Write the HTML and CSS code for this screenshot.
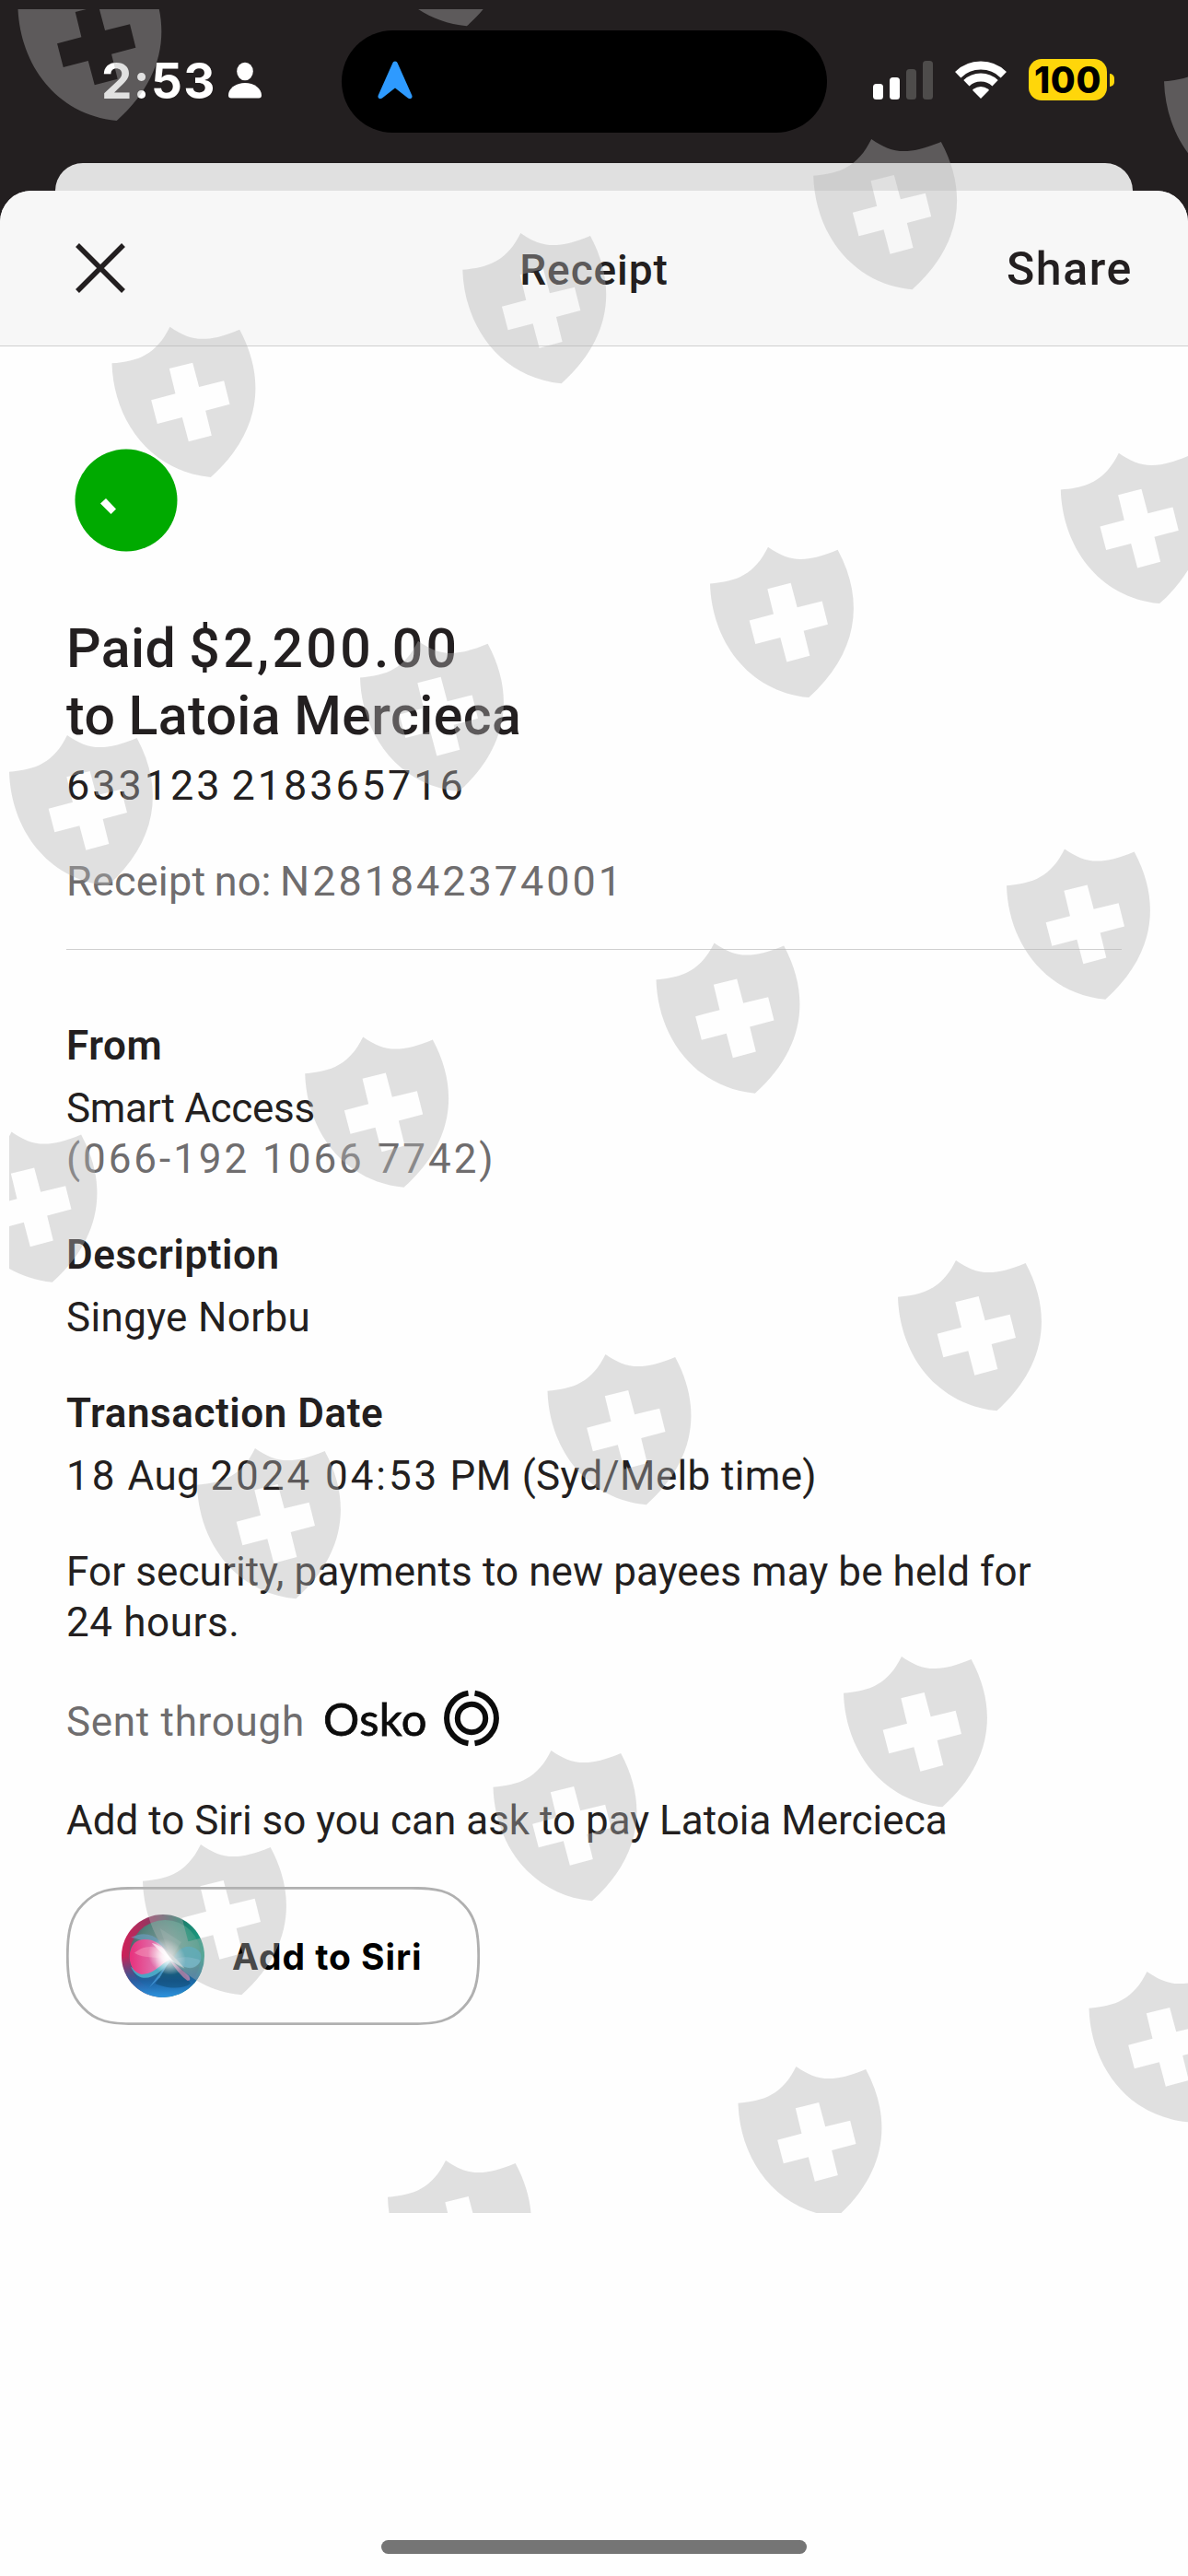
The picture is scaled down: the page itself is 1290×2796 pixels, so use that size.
FILE: index.html
```html
<!DOCTYPE html>
<html lang="en">
<head>
  <meta charset="UTF-8">
  <meta name="viewport" content="width=device-width, initial-scale=1.0">
  <title>Receipt</title>
  <link rel="stylesheet" href="styles.css">
</head>
<body>
  <div class="screen">
    <div class="status-bar">
      <div class="status-left">
        <span class="clock">2:53</span>
        <svg class="icon-person" viewBox="0 0 36 40" width="36" height="40">
          <ellipse cx="18" cy="10.5" rx="8.8" ry="9.8"/>
          <path d="M3 39.5C1 39.5 0 38.5 0 36.500C0 29 8 23 18 23C28 23 36 29 36 36.500C36 38.500 35 39.500 33 39.500Z"/>
        </svg>
      </div>
      <div class="island">
        <svg viewBox="0 0 38 42" width="38" height="42">
          <path d="M16.300 2.500C17 -.3 21 -.3 21.700 2.500L37.300 37.500C38.500 40.500 35.500 42.500 33 40.500L19 29.500L5 40.500C2.500 42.500 -.5 40.500 .7 37.500Z"/>
        </svg>
      </div>
      <div class="status-right">
        <svg class="icon-signal" viewBox="0 0 66 42" width="66" height="42">
          <rect x="0" y="25" width="11" height="17" rx="3.500"/>
          <rect x="18" y="18" width="11" height="24" rx="3.500"/>
          <rect class="dim" x="36" y="9" width="11" height="33" rx="3.500"/>
          <rect class="dim" x="54" y="0" width="11" height="42" rx="3.500"/>
        </svg>
        <svg class="icon-wifi" viewBox="0 0 58 42" width="58" height="42">
          <path class="wave" d="M4.200 16.200A35.500 35.500 0 0 1 53.800 16.200"/>
          <path class="wave" d="M13.400 25.200A22.500 22.500 0 0 1 44.600 25.200"/>
          <path d="M29 42L20.300 33.200Q20 32.300 20.800 31.800Q29 26 37.200 31.800Q38 32.300 37.700 33.200Z"/>
        </svg>
        <div class="battery">
          <span class="battery-level">100</span>
          <span class="battery-cap"></span>
        </div>
      </div>
    </div>

    <div class="sheet-behind"></div>

    <main class="sheet">
      <header class="sheet-header">
        <svg class="icon-close" viewBox="0 0 54 54" width="54" height="54">
          <path d="M2 2L52 52M52 2L2 52"/>
        </svg>
        <h2 class="sheet-title">Receipt</h2>
        <span class="share">Share</span>
      </header>

      <div class="receipt">
        <svg class="icon-paid" viewBox="0 0 112 112" width="112" height="112">
          <circle cx="56" cy="56" r="55.500"/>
          <path d="M34 54L45 65.500L39.500 71L28 59.500Z"/>
        </svg>

        <h1 class="amount">Paid <span class="num">$2,200.00</span><br>to Latoia Mercieca</h1>
        <p class="account num">633123 218365716</p>
        <p class="receipt-no">Receipt no: <span class="num">N281842374001</span></p>

        <dl class="details">
          <div>
            <dt>From</dt>
            <dd><span class="account-name">Smart Access</span><br><span class="muted num">(066-192 1066 7742)</span></dd>
          </div>
          <div>
            <dt>Description</dt>
            <dd>Singye Norbu</dd>
          </div>
          <div>
            <dt>Transaction Date</dt>
            <dd><span class="num">18</span> Aug <span class="num">2024 04:53</span> PM (Syd/Melb time)</dd>
          </div>
        </dl>

        <p class="notice">For security, payments to new payees may be held for<br><span class="hours">24 hours.</span></p>

        <div class="osko">
          <span class="muted">Sent through</span>
          <span class="osko-name">Osko</span>
          <svg class="osko-mark" viewBox="0 0 62 62" width="62" height="62">
            <circle cx="31" cy="31" r="15.200"/>
            <path d="M27.500 3.800A27.500 27.500 0 0 0 27.500 58.200M34.500 3.800A27.500 27.500 0 0 1 34.500 58.200"/>
          </svg>
        </div>

        <p class="siri-hint">Add to Siri so you can ask to pay Latoia Mercieca</p>

        <div class="siri-button">
          <svg class="siri-outline" viewBox="0 0 449 150" width="449" height="150">
            <path d="M75 1.300H374C402 1.300 417 4 431 19C444 32 447.700 48 447.700 75C447.700 102 444 118 431 131C417 146 402 148.700 374 148.700H75C47 148.700 32 146 18 131C5 118 1.300 102 1.300 75C1.300 48 5 32 18 19C32 4 47 1.300 75 1.300Z"/>
          </svg>
          <svg class="siri-orb" viewBox="0 0 270 270" width="90" height="90">
            <defs>
              <linearGradient id="rim" x1="0" y1=".4" x2="1" y2=".5">
                <stop offset="0" stop-color="#d02058"/>
                <stop offset=".35" stop-color="#8a3a62"/>
                <stop offset=".65" stop-color="#1c7868"/>
                <stop offset="1" stop-color="#18a084"/>
              </linearGradient>
              <linearGradient id="floor" x1="0" y1="0" x2="0" y2="1">
                <stop offset=".5" stop-color="#1a5f96" stop-opacity="0"/>
                <stop offset=".8" stop-color="#1c62a8" stop-opacity=".9"/>
                <stop offset="1" stop-color="#2c94e0"/>
              </linearGradient>
              <radialGradient id="teal" cx=".55" cy=".35" r=".65">
                <stop offset="0" stop-color="#94b4ac"/>
                <stop offset=".6" stop-color="#3a9c84"/>
                <stop offset="1" stop-color="#1c5d66"/>
              </radialGradient>
              <radialGradient id="glow">
                <stop offset="0" stop-color="#fff"/>
                <stop offset=".3" stop-color="#fff" stop-opacity=".8"/>
                <stop offset="1" stop-color="#fff" stop-opacity="0"/>
              </radialGradient>
              <linearGradient id="pink" x1="0" y1="0" x2="1" y2="0">
                <stop offset="0" stop-color="#e8307c"/>
                <stop offset=".6" stop-color="#e070ac"/>
                <stop offset="1" stop-color="#fff"/>
              </linearGradient>
            </defs>
            <circle cx="135" cy="135" r="135" fill="url(#rim)"/>
            <circle cx="142" cy="135" r="117" fill="url(#teal)" opacity=".75"/>
            <circle cx="135" cy="135" r="135" fill="url(#floor)"/>
            <path d="M155 155C185 145 205 190 225 225C190 250 130 235 110 225Z" fill="#0c4264" opacity=".45"/>
            <path d="M30 170C60 235 120 205 165 145C110 175 70 195 30 170Z" fill="#5cc8e0" opacity=".65"/>
            <path d="M30 75C85 45 135 75 165 145C110 105 70 80 30 75Z" fill="#6ea0c8" opacity=".6"/>
            <path d="M165 145C125 80 85 75 55 85C15 100 15 185 65 195C110 195 130 155 165 145Z" fill="url(#pink)"/>
            <path d="M165 150C120 90 75 100 42 125C70 145 125 135 165 150Z" fill="#f8a4c0" opacity=".45"/>
            <path d="M165 150C185 100 230 90 257 125C270 165 225 195 165 150Z" fill="#2ca8c0" opacity=".8"/>
            <path d="M165 150C190 135 225 135 257 150C240 185 210 180 165 150Z" fill="#60bcd8" opacity=".6"/>
            <path d="M155 145L220 200Q228 218 214 215Q185 195 155 145Z" fill="#e08cb4" opacity=".65"/>
            <path d="M160 145L90 238L125 205Z" fill="#58b4f0" opacity=".55"/>
            <path d="M160 145L125 45L195 90Z" fill="#fff" opacity=".12"/>
            <ellipse cx="148" cy="138" rx="66" ry="54" fill="url(#glow)" transform="rotate(38 148 138)"/>
            <path d="M98 92Q150 108 206 176Q150 150 98 92Z" fill="#fff" opacity=".6"/>
          </svg>
          <span class="siri-label">Add to Siri</span>
        </div>
      </div>
    </main>

    <div class="home-indicator"></div>

    <!-- Repeating shield watermark, clipped to its own canvas -->
    <svg class="watermark" viewBox="10 10 1280 2392" width="1280" height="2392">
      <defs>
        <path id="shield" transform="scale(.3333)" fill-rule="evenodd" d="M0 119C85 113 145 90 189 0C255 46 305 55 416 9C508 180 478 350 322 490C120 470 5 300 0 119ZM187 136L207 218L128 239L148 316L229 295L250 374L325 354L305 273L384 252L365 176L284 196L263 117Z"/>
      </defs>
      <use href="#shield" x="19.400" y="-32.300"/>
      <use href="#shield" x="399.500" y="-135"/>
      <use href="#shield" x="1264" y="48.500"/>
      <use href="#shield" x="883.200" y="151"/>
      <use href="#shield" x="502.300" y="253"/>
      <use href="#shield" x="121.500" y="354.700"/>
      <use href="#shield" x="1151.800" y="491.800"/>
      <use href="#shield" x="771" y="593.800"/>
      <use href="#shield" x="391" y="695.800"/>
      <use href="#shield" x="10" y="798"/>
      <use href="#shield" x="1093" y="921.500"/>
      <use href="#shield" x="712.500" y="1023.500"/>
      <use href="#shield" x="331.200" y="1125.500"/>
      <use href="#shield" x="-50.500" y="1228.500"/>
      <use href="#shield" x="975" y="1368"/>
      <use href="#shield" x="594.500" y="1470"/>
      <use href="#shield" x="214" y="1572"/>
      <use href="#shield" x="916" y="1798"/>
      <use href="#shield" x="535.500" y="1900"/>
      <use href="#shield" x="155" y="2002"/>
      <use href="#shield" x="1182.500" y="2140"/>
      <use href="#shield" x="801.500" y="2243"/>
      <use href="#shield" x="421" y="2345"/>
    </svg>
  </div>
</body>
</html>
```
FILE: styles.css
```css
:root {
  --ink: #231f20;
  --muted: #6f6d6e;
  --surface: #fefefe;
  --header: #f7f7f7;
  --line: #cfcfcf;
  --green: #00aa00;
  --battery: #ffd60a;
}

* {
  margin: 0;
  padding: 0;
  box-sizing: border-box;
}

body {
  background-color: var(--ink);
  color: var(--ink);
  font-family: Roboto, "Liberation Sans", sans-serif;
}

svg {
  display: block;
}

.screen {
  position: relative;
  width: 1290px;
  height: 2796px;
  overflow: hidden;
  display: flex;
  flex-direction: column;
}

/* Status bar */
.status-bar {
  height: 177px;
  flex-shrink: 0;
  display: grid;
  grid-template-columns: 371px 527px 1fr;
  align-items: start;
  padding-top: 33px;
}

.status-left {
  display: flex;
  align-items: center;
  gap: 14px;
  height: 111px;
  padding-left: 110px;
}

.clock {
  font-family: Inter, sans-serif;
  font-size: 53px;
  font-weight: 700;
  line-height: 64px;
  letter-spacing: 1.4px;
  color: #fff;
  width: 124px;
  margin-bottom: 2px;
}

.icon-person {
  fill: #fff;
  margin-bottom: 4px;
}

.island {
  height: 111px;
  border-radius: 56px;
  background-color: #000;
  padding: 33px 0 0 39px;
}

.island svg {
  fill: #2e9aff;
}

.status-right {
  display: flex;
  align-items: flex-start;
  padding: 31px 0 0 50px;
}

.icon-signal {
  fill: #fff;
  margin-top: 2px;
}

.icon-signal .dim {
  fill: #4e4c4b;
}

.icon-wifi {
  fill: #fff;
  margin: 1px 23px 0 22px;
}

.icon-wifi .wave {
  fill: none;
  stroke: #fff;
  stroke-width: 9;
}

.battery {
  display: flex;
  align-items: center;
  gap: 3px;
}

.battery-level {
  width: 85px;
  height: 45px;
  border-radius: 14px;
  background-color: var(--battery);
  color: #000;
  font-family: Inter, sans-serif;
  font-size: 39px;
  font-weight: 800;
  line-height: 45px;
  letter-spacing: 0.6px;
  text-align: center;
}

.battery-cap {
  width: 5px;
  height: 14px;
  border-radius: 0 5px 5px 0;
  background-color: var(--battery);
}

/* Sheets */
.sheet-behind {
  height: 30px;
  flex-shrink: 0;
  margin: 0 60px;
  border-radius: 30px 30px 0 0;
  background-color: #e0e0e0;
}

.sheet {
  flex: 1;
  border-radius: 34px 34px 0 0;
  background-color: var(--surface);
  overflow: hidden;
}

.sheet-header {
  height: 169px;
  display: grid;
  grid-template-columns: 1fr auto 1fr;
  align-items: center;
  padding: 0 60px 0 82px;
  background-color: var(--header);
  border-bottom: 1px solid var(--line);
}

.icon-close {
  stroke: var(--ink);
  stroke-width: 5.5;
}

.sheet-title {
  font-size: 46px;
  font-weight: 500;
  line-height: 56px;
  letter-spacing: 0.9px;
  margin-left: -22px;
  padding-top: 3px;
}

.share {
  justify-self: end;
  font-size: 50px;
  font-weight: 500;
  line-height: 56px;
  letter-spacing: 1.6px;
  padding-top: 1px;
}

/* Receipt */
.receipt {
  padding: 111px 72px 0;
  font-size: 44px;
  line-height: 55px;
  letter-spacing: 0.2px;
}

.icon-paid {
  fill: var(--green);
  margin-left: 8.5px;
}

.icon-paid path {
  fill: #fff;
}

.num {
  letter-spacing: 2.95px;
}

.muted {
  color: var(--muted);
}

.amount {
  margin-top: 68px;
  font-size: 59px;
  font-weight: 500;
  line-height: 73px;
  letter-spacing: 0.45px;
  word-spacing: -1px;
}

.amount .num {
  letter-spacing: 3.3px;
}

.account {
  margin-top: 12px;
  font-size: 45px;
  word-spacing: -4px;
}

.receipt-no {
  padding: 49px 0 46px;
  font-size: 45px;
  color: var(--muted);
  border-bottom: 1px solid var(--line);
  word-spacing: -2px;
}

.details {
  display: flex;
  flex-direction: column;
  gap: 49px;
  margin-top: 77px;
}

.details dt {
  font-weight: 600;
  letter-spacing: 0.55px;
  margin-bottom: 13px;
}

.details dd {
  letter-spacing: 0.35px;
}

.details .account-name {
  letter-spacing: -0.3px;
}

.details .num {
  letter-spacing: 2.95px;
}

.notice {
  margin-top: 49px;
  letter-spacing: 0.1px;
}

.hours {
  letter-spacing: 0.6px;
}

.osko {
  display: flex;
  align-items: center;
  height: 62px;
  margin-top: 45px;
}

.osko .muted {
  width: 279px;
  padding-top: 8px;
  letter-spacing: 0.7px;
}

.osko-name {
  width: 130px;
  font-family: Lato, sans-serif;
  font-size: 49px;
  font-weight: 400;
  letter-spacing: 0.4px;
  color: #0c0c0c;
  -webkit-text-stroke: 0.8px #0c0c0c;
}

.osko-mark {
  fill: none;
  stroke: #0c0c0c;
  stroke-width: 6;
}

.siri-hint {
  margin-top: 53px;
  letter-spacing: 0;
}

.siri-button {
  position: relative;
  display: flex;
  align-items: center;
  gap: 30px;
  width: 449px;
  height: 150px;
  margin-top: 44px;
  padding-left: 60px;
}

.siri-outline {
  position: absolute;
  inset: 0;
  fill: none;
  stroke: #b0b0b0;
  stroke-width: 2.8;
}

.siri-label {
  font-family: Inter, sans-serif;
  font-size: 39px;
  font-weight: 700;
  letter-spacing: 0.9px;
  color: #000;
  padding-top: 1px;
}

.home-indicator {
  position: absolute;
  left: 414px;
  bottom: 24px;
  width: 462px;
  height: 15px;
  border-radius: 8px;
  background-color: #757575;
}

.watermark {
  position: absolute;
  top: 10px;
  left: 10px;
  fill: rgba(179, 179, 179, 0.4);
}
```
